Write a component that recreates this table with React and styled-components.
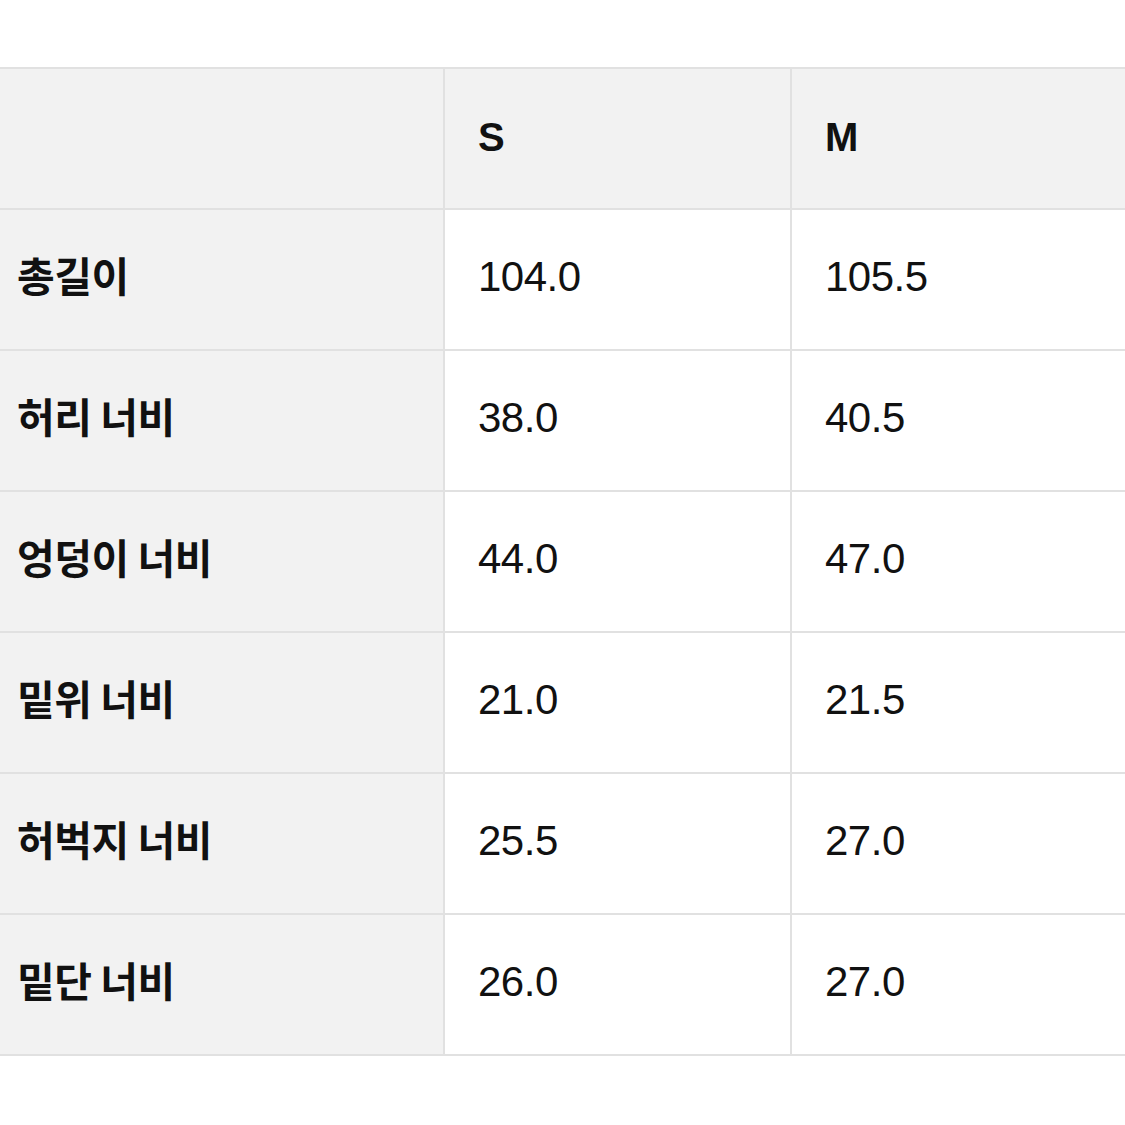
import React from 'react';
import styled, { createGlobalStyle } from 'styled-components';

const GlobalStyle = createGlobalStyle`
  html, body {
    margin: 0;
    padding: 0;
    background: #ffffff;
  }
  body {
    font-family: "Liberation Sans", "Noto Sans CJK KR", sans-serif;
    color: #111111;
  }
`;

const Page = styled.div`
  width: 1125px;
  height: 1125px;
  overflow: hidden;
  padding-top: 67px;
  box-sizing: border-box;
`;

const Table = styled.div`
  display: grid;
  grid-template-columns: 445px 347px 360px;
  width: 1152px;
  border-top: 2px solid #e1e1e1;
`;

const Cell = styled.div`
  height: 137px;
  padding-bottom: 2px;
  display: flex;
  align-items: center;
  box-sizing: content-box;
  border-bottom: 2px solid #e1e1e1;
  border-left: ${({ $first }) => ($first ? 'none' : '2px solid #e1e1e1')};
  background: ${({ $shaded }) => ($shaded ? '#f2f2f2' : '#ffffff')};
  padding-left: ${({ $first }) => ($first ? '17px' : '33px')};
  margin-left: ${({ $first }) => ($first ? '0' : '-2px')};
`;

const HeadText = styled.span`
  font-size: 40px;
  font-weight: 700;
`;

const LabelText = styled.span`
  font-family: "Noto Sans CJK KR", sans-serif;
  font-size: 41px;
  font-weight: 700;
  letter-spacing: -0.5px;
  margin-bottom: 9px;
`;

const ValueText = styled.span`
  font-size: 42px;
  font-weight: 400;
  letter-spacing: -0.5px;
  margin-bottom: 3px;
`;

const rows = [
  ['총길이', '104.0', '105.5'],
  ['허리 너비', '38.0', '40.5'],
  ['엉덩이 너비', '44.0', '47.0'],
  ['밑위 너비', '21.0', '21.5'],
  ['허벅지 너비', '25.5', '27.0'],
  ['밑단 너비', '26.0', '27.0'],
];

export default function App() {
  return (
    <>
      <GlobalStyle />
      <Page>
        <Table>
          <Cell $first $shaded />
          <Cell $shaded><HeadText>S</HeadText></Cell>
          <Cell $shaded><HeadText>M</HeadText></Cell>
          {rows.map(([label, s, m]) => (
            <React.Fragment key={label}>
              <Cell $first $shaded><LabelText>{label}</LabelText></Cell>
              <Cell><ValueText>{s}</ValueText></Cell>
              <Cell><ValueText>{m}</ValueText></Cell>
            </React.Fragment>
          ))}
        </Table>
      </Page>
    </>
  );
}
